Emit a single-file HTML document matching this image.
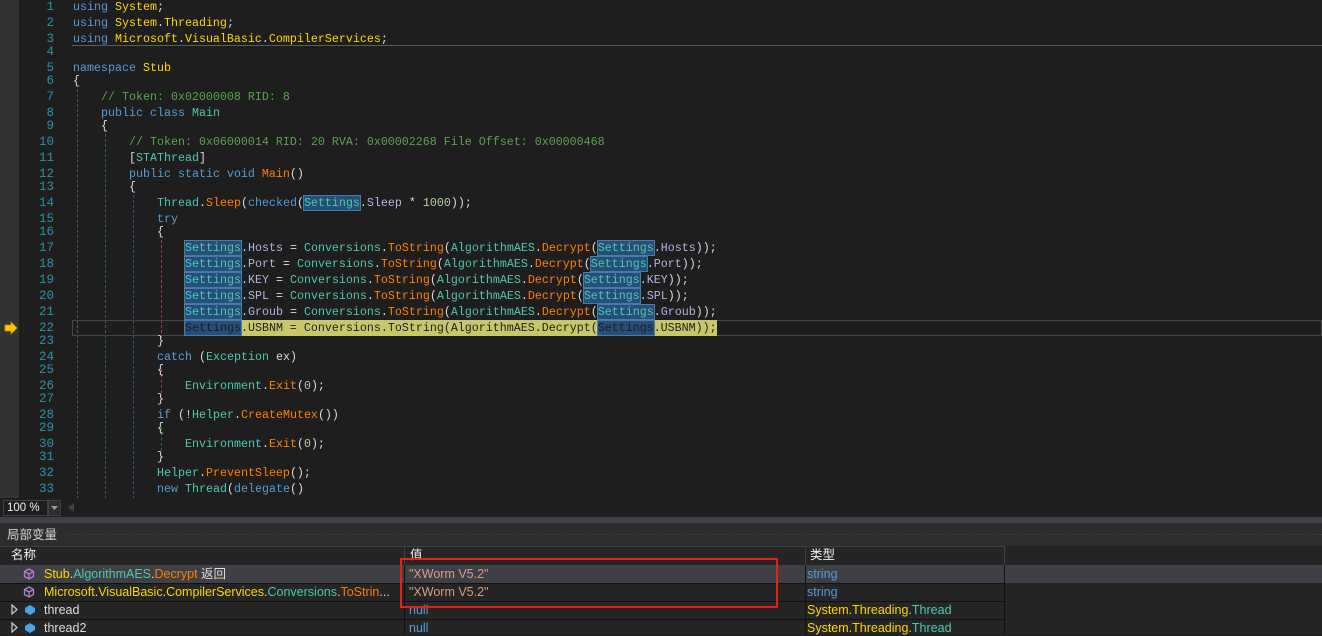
<!DOCTYPE html>
<html><head><meta charset="utf-8"><style>
*{margin:0;padding:0;box-sizing:border-box}
body{width:1322px;height:635px;background:#1e1e1e;overflow:hidden;position:relative;font-family:"Liberation Mono","Noto Sans CJK SC",monospace}
.gm{position:absolute;left:0;top:0;width:19px;height:498px;background:#333333}
.ln{position:absolute;left:19px;width:35px;text-align:right;color:#2b91af;font-size:12.5px;line-height:16px;height:16px}
.cl{position:absolute;font-size:11.67px;line-height:16px;height:16px;white-space:pre;color:#dcdcdc}
.k{color:#569cd6}.t{color:#4ec9b0}.m{color:#ff8000}.n{color:#ffd700}.p{color:#b8b0e0}.c{color:#57a64a}.num{color:#b5cea8}
.s{background:#264f78;outline:1px solid #4a7aa6;color:#4ec9b0}
.g{position:absolute;width:0;border-left:1px dashed}
.ui{font-family:"Liberation Sans","Noto Sans CJK SC",sans-serif;font-size:12.5px;line-height:16px;height:16px;position:absolute;white-space:nowrap}
</style></head><body>
<div class="gm"></div>
<div style="position:absolute;left:72px;top:45px;width:1250px;height:1px;background:#5a5a5a"></div>
<div class="g" style="left:77px;top:89px;height:410px;border-color:#555"></div>
<div class="g" style="left:105px;top:134px;height:365px;border-color:#2e6b4a"></div>
<div class="g" style="left:133px;top:195px;height:304px;border-color:#2a5a8a"></div>
<div class="g" style="left:161px;top:240px;height:98px;border-color:#a04040"></div>
<div class="g" style="left:161px;top:369px;height:24px;border-color:#a04040"></div>
<div class="g" style="left:161px;top:427px;height:24px;border-color:#2e6b4a"></div>
<div style="position:absolute;left:72px;top:320px;width:1250px;height:16px;border:1px solid #464646"></div>
<div style="position:absolute;left:185px;top:320px;width:532px;height:16px;background:#c8c86a"></div>
<svg style="position:absolute;left:4px;top:321px" width="14" height="14"><path d="M1 4h6V1l6 6-6 6v-3H1z" fill="#ffcc00" stroke="#c89000" stroke-width=".8"/></svg>

<div class="ln" style="top:-1px">1</div><div class="cl" style="left:73px;top:-1px"><span class="k">using</span> <span class="n">System</span>;</div>
<div class="ln" style="top:15px">2</div><div class="cl" style="left:73px;top:15px"><span class="k">using</span> <span class="n">System</span>.<span class="n">Threading</span>;</div>
<div class="ln" style="top:31px">3</div><div class="cl" style="left:73px;top:31px"><span class="k">using</span> <span class="n">Microsoft</span>.<span class="n">VisualBasic</span>.<span class="n">CompilerServices</span>;</div>
<div class="ln" style="top:44px">4</div>
<div class="ln" style="top:60px">5</div><div class="cl" style="left:73px;top:60px"><span class="k">namespace</span> <span class="n">Stub</span></div>
<div class="ln" style="top:73px">6</div><div class="cl" style="left:73px;top:73px">{</div>
<div class="ln" style="top:89px">7</div><div class="cl c" style="left:101px;top:89px">// Token: 0x02000008 RID: 8</div>
<div class="ln" style="top:105px">8</div><div class="cl" style="left:101px;top:105px"><span class="k">public class</span> <span class="t">Main</span></div>
<div class="ln" style="top:118px">9</div><div class="cl" style="left:101px;top:118px">{</div>
<div class="ln" style="top:134px">10</div><div class="cl c" style="left:129px;top:134px">// Token: 0x06000014 RID: 20 RVA: 0x00002268 File Offset: 0x00000468</div>
<div class="ln" style="top:150px">11</div><div class="cl" style="left:129px;top:150px">[<span class="t">STAThread</span>]</div>
<div class="ln" style="top:166px">12</div><div class="cl" style="left:129px;top:166px"><span class="k">public static void</span> <span class="m">Main</span>()</div>
<div class="ln" style="top:179px">13</div><div class="cl" style="left:129px;top:179px">{</div>
<div class="ln" style="top:195px">14</div><div class="cl" style="left:157px;top:195px"><span class="t">Thread</span>.<span class="m">Sleep</span>(<span class="k">checked</span>(<span class="s">Settings</span>.<span class="p">Sleep</span> * <span class="num">1000</span>));</div>
<div class="ln" style="top:211px">15</div><div class="cl k" style="left:157px;top:211px">try</div>
<div class="ln" style="top:224px">16</div><div class="cl" style="left:157px;top:224px">{</div>
<div class="ln" style="top:240px">17</div><div class="cl" style="left:185px;top:240px"><span class="s">Settings</span>.<span class="p">Hosts</span> = <span class="t">Conversions</span>.<span class="m">ToString</span>(<span class="t">AlgorithmAES</span>.<span class="m">Decrypt</span>(<span class="s">Settings</span>.<span class="p">Hosts</span>));</div>
<div class="ln" style="top:256px">18</div><div class="cl" style="left:185px;top:256px"><span class="s">Settings</span>.<span class="p">Port</span> = <span class="t">Conversions</span>.<span class="m">ToString</span>(<span class="t">AlgorithmAES</span>.<span class="m">Decrypt</span>(<span class="s">Settings</span>.<span class="p">Port</span>));</div>
<div class="ln" style="top:272px">19</div><div class="cl" style="left:185px;top:272px"><span class="s">Settings</span>.<span class="p">KEY</span> = <span class="t">Conversions</span>.<span class="m">ToString</span>(<span class="t">AlgorithmAES</span>.<span class="m">Decrypt</span>(<span class="s">Settings</span>.<span class="p">KEY</span>));</div>
<div class="ln" style="top:288px">20</div><div class="cl" style="left:185px;top:288px"><span class="s">Settings</span>.<span class="p">SPL</span> = <span class="t">Conversions</span>.<span class="m">ToString</span>(<span class="t">AlgorithmAES</span>.<span class="m">Decrypt</span>(<span class="s">Settings</span>.<span class="p">SPL</span>));</div>
<div class="ln" style="top:304px">21</div><div class="cl" style="left:185px;top:304px"><span class="s">Settings</span>.<span class="p">Groub</span> = <span class="t">Conversions</span>.<span class="m">ToString</span>(<span class="t">AlgorithmAES</span>.<span class="m">Decrypt</span>(<span class="s">Settings</span>.<span class="p">Groub</span>));</div>
<div class="ln" style="top:320px">22</div><div class="cl" style="left:185px;top:320px;color:#1e1e1e"><span class="s" style="color:#1e1e1e">Settings</span>.USBNM = Conversions.ToString(AlgorithmAES.Decrypt(<span class="s" style="color:#1e1e1e">Settings</span>.USBNM));</div>
<div class="ln" style="top:333px">23</div><div class="cl" style="left:157px;top:333px">}</div>
<div class="ln" style="top:349px">24</div><div class="cl" style="left:157px;top:349px"><span class="k">catch</span> (<span class="t">Exception</span> ex)</div>
<div class="ln" style="top:362px">25</div><div class="cl" style="left:157px;top:362px">{</div>
<div class="ln" style="top:378px">26</div><div class="cl" style="left:185px;top:378px"><span class="t">Environment</span>.<span class="m">Exit</span>(<span class="num">0</span>);</div>
<div class="ln" style="top:391px">27</div><div class="cl" style="left:157px;top:391px">}</div>
<div class="ln" style="top:407px">28</div><div class="cl" style="left:157px;top:407px"><span class="k">if</span> (!<span class="t">Helper</span>.<span class="m">CreateMutex</span>())</div>
<div class="ln" style="top:420px">29</div><div class="cl" style="left:157px;top:420px">{</div>
<div class="ln" style="top:436px">30</div><div class="cl" style="left:185px;top:436px"><span class="t">Environment</span>.<span class="m">Exit</span>(<span class="num">0</span>);</div>
<div class="ln" style="top:449px">31</div><div class="cl" style="left:157px;top:449px">}</div>
<div class="ln" style="top:465px">32</div><div class="cl" style="left:157px;top:465px"><span class="t">Helper</span>.<span class="m">PreventSleep</span>();</div>
<div class="ln" style="top:481px">33</div><div class="cl" style="left:157px;top:481px"><span class="k">new</span> <span class="t">Thread</span>(<span class="k">delegate</span>()</div>

<div style="position:absolute;left:0;top:498px;width:1322px;height:19px;background:#1f1f1f"></div>
<div class="ui" style="left:3px;top:500px;width:45px;height:16px;background:#1e1e1e;border:1px solid #3f3f46;color:#f1f1f1;font-size:11.5px;padding-left:3px;line-height:14px">100 %</div>
<div style="position:absolute;left:48px;top:500px;width:13px;height:16px;background:#2d2d30;border:1px solid #3f3f46"></div>
<svg style="position:absolute;left:51px;top:506px" width="7" height="4"><path d="M0 0h7L3.5 4z" fill="#999"/></svg>
<svg style="position:absolute;left:68px;top:503px" width="6" height="9"><path d="M6 0v9L0 4.5z" fill="#3f3f46"/></svg>
<div style="position:absolute;left:0;top:517px;width:1322px;height:5px;background:#3f3f46"></div>
<div style="position:absolute;left:0;top:522px;width:1322px;height:113px;background:#2d2d30"></div>
<div style="position:absolute;left:0;top:522px;width:1322px;height:1px;background:#444"></div>
<div class="ui" style="left:7px;top:527px;color:#d0d0d0">局部变量</div>
<div style="position:absolute;left:66px;top:533px;width:1256px;height:4px;background-image:radial-gradient(#46464a 0.6px,transparent 0.8px);background-size:3px 3px"></div>
<div style="position:absolute;left:0;top:546px;width:1322px;height:89px;background:#252526"></div>
<div style="position:absolute;left:0;top:546px;width:1005px;height:19px;background:#252526;border-top:1px solid #3f3f46"></div>
<div class="ui" style="left:11px;top:547px;color:#f1f1f1">名称</div>
<div class="ui" style="left:410px;top:547px;color:#f1f1f1">值</div>
<div class="ui" style="left:810px;top:547px;color:#f1f1f1">类型</div>
<div style="position:absolute;left:404px;top:546px;width:1px;height:89px;background:#3f3f46"></div>
<div style="position:absolute;left:805px;top:546px;width:1px;height:89px;background:#3f3f46"></div>
<div style="position:absolute;left:1004px;top:546px;width:1px;height:19px;background:#3f3f46"></div>
<div style="position:absolute;left:0;top:565px;width:1322px;height:18px;background:#3f3f46"></div>
<div style="position:absolute;left:0;top:583px;width:1005px;height:1px;background:#111"></div>
<div style="position:absolute;left:0;top:601px;width:1005px;height:1px;background:#111"></div>
<div style="position:absolute;left:0;top:619px;width:1005px;height:1px;background:#111"></div>
<div style="position:absolute;left:805px;top:565px;width:1px;height:70px;background:#111"></div>
<div style="position:absolute;left:1004px;top:565px;width:1px;height:70px;background:#111"></div>
<div style="position:absolute;left:404px;top:565px;width:1px;height:70px;background:#111"></div>
<svg style="position:absolute;left:23px;top:568px" width="12" height="12"><path d="M6 1l4.5 2.5v5L6 11 1.5 8.5v-5zM1.5 3.5L6 6l4.5-2.5M6 6v5" fill="none" stroke="#b180d7" stroke-width="1.3"/></svg>
<svg style="position:absolute;left:23px;top:586px" width="12" height="12"><path d="M6 1l4.5 2.5v5L6 11 1.5 8.5v-5zM1.5 3.5L6 6l4.5-2.5M6 6v5" fill="none" stroke="#b180d7" stroke-width="1.3"/></svg>
<div class="ui" style="left:44px;top:566px;color:#dcdcdc"><span style="color:#ffd700">Stub</span>.<span style="color:#4ec9b0">AlgorithmAES</span>.<span style="color:#ff8000">Decrypt</span> 返回</div>
<div class="ui" style="left:44px;top:584px;color:#dcdcdc;width:356px;overflow:hidden"><span style="color:#ffd700">Microsoft</span>.<span style="color:#ffd700">VisualBasic</span>.<span style="color:#ffd700">CompilerServices</span>.<span style="color:#4ec9b0">Conversions</span>.<span style="color:#ff8000">ToStrin</span>...</div>
<svg style="position:absolute;left:11px;top:604px" width="7" height="11"><path d="M1 1l5 4.5L1 10z" fill="none" stroke="#ccc" stroke-width="1.2"/></svg>
<svg style="position:absolute;left:11px;top:622px" width="7" height="11"><path d="M1 1l5 4.5L1 10z" fill="none" stroke="#ccc" stroke-width="1.2"/></svg>
<svg style="position:absolute;left:24px;top:604px" width="12" height="11"><path d="M1 4l5-3 5 3v4l-5 3-5-3z" fill="#4aa3e8"/></svg>
<svg style="position:absolute;left:24px;top:622px" width="12" height="11"><path d="M1 4l5-3 5 3v4l-5 3-5-3z" fill="#4aa3e8"/></svg>
<div class="ui" style="left:44px;top:602px;color:#dcdcdc">thread</div>
<div class="ui" style="left:44px;top:620px;color:#dcdcdc">thread2</div>
<div class="ui" style="left:409px;top:566px;color:#d69d85">"XWorm V5.2"</div>
<div class="ui" style="left:409px;top:584px;color:#d69d85">"XWorm V5.2"</div>
<div class="ui" style="left:409px;top:602px;color:#569cd6">null</div>
<div class="ui" style="left:409px;top:620px;color:#569cd6">null</div>
<div class="ui" style="left:807px;top:566px;color:#569cd6">string</div>
<div class="ui" style="left:807px;top:584px;color:#569cd6">string</div>
<div class="ui" style="left:807px;top:602px"><span style="color:#ffd700">System.Threading.</span><span style="color:#4ec9b0">Thread</span></div>
<div class="ui" style="left:807px;top:620px"><span style="color:#ffd700">System.Threading.</span><span style="color:#4ec9b0">Thread</span></div>
<div style="position:absolute;left:400px;top:558px;width:378px;height:50px;border:2px solid #e8201a"></div>
</body></html>
